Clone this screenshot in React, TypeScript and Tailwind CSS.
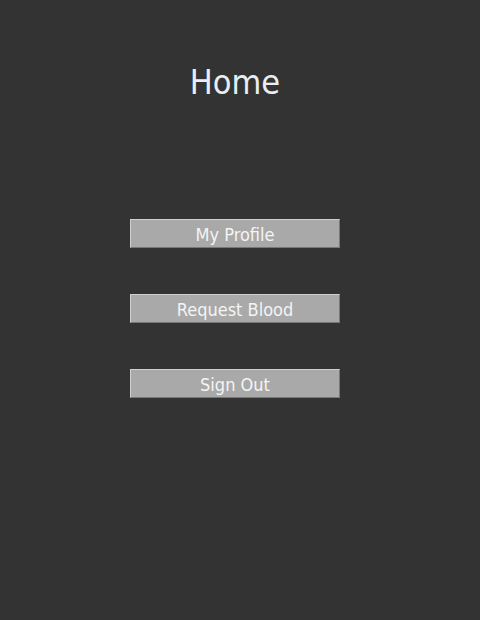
export default function App() {
  const btn =
    "block w-[210px] h-[29px] bg-[#a9a9a9] text-[#f4f4f4] text-[18px] leading-[28px] pt-[1px] text-center border border-t-[#cfcfcf] border-l-[#cfcfcf] border-r-[#777777] border-b-[#777777]";
  return (
    <div
      className="w-[480px] h-[620px] bg-[#333333] flex flex-col items-center pr-[10px]"
      style={{ fontFamily: "'DejaVu Sans Condensed', 'DejaVu Sans', sans-serif" }}
    >
      <h1 className="mt-[60px] text-[34px] leading-[44px] text-[#e8eef4]">Home</h1>
      <div className="mt-[115px] flex flex-col gap-[46px]">
        <button className={btn}>My Profile</button>
        <button className={btn}>Request Blood</button>
        <button className={btn}>Sign Out</button>
      </div>
    </div>
  );
}
